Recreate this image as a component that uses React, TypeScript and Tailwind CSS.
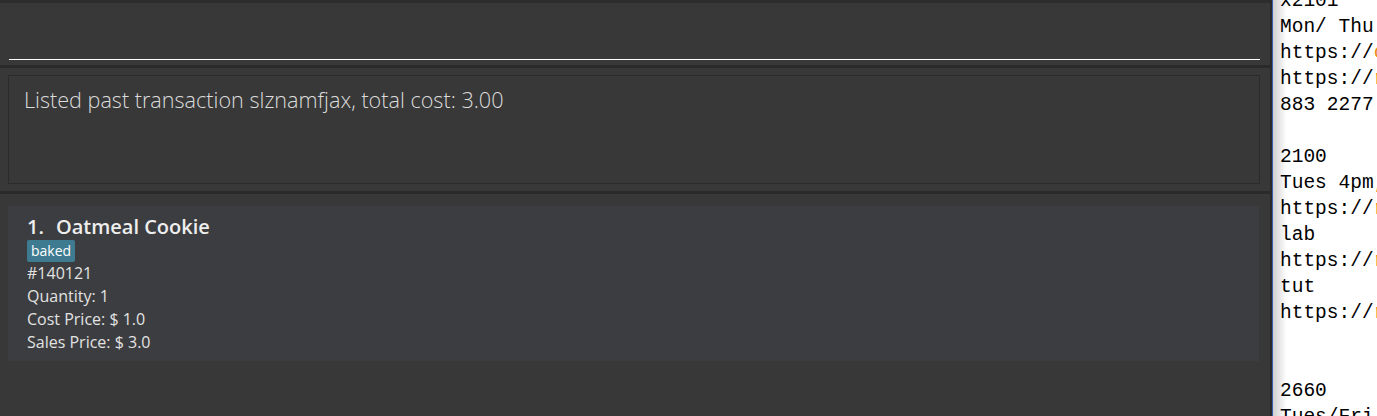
const editorLines: { text: string; link?: string }[] = [
  { text: "x2101" },
  { text: "Mon/ Thu" },
  { text: "https://", link: "c" },
  { text: "https://", link: "r" },
  { text: "883 2277" },
  { text: "" },
  { text: "2100" },
  { text: "Tues 4pm", link: "," },
  { text: "https://", link: "r" },
  { text: "lab" },
  { text: "https://", link: "r" },
  { text: "tut" },
  { text: "https://", link: "r" },
  { text: "" },
  { text: "" },
  { text: "2660" },
  { text: "Tues/Fri" },
];

const details = ["#140121", "Quantity: 1", "Cost Price: $ 1.0", "Sales Price: $ 3.0"];

export default function App() {
  return (
    <div className="flex h-[416px] w-[1377px] overflow-hidden bg-[#383838]">
      {/* main app window */}
      <div className="flex w-[1270px] shrink-0 flex-col font-['Open_Sans',sans-serif]">
        <div className="h-[3px] bg-[#2d2d2d]" />
        <div className="flex h-[62px] flex-col justify-end pb-[5px] pl-[9px] pr-[10px]">
          <div className="h-px bg-white" />
        </div>
        <div className="h-[3px] bg-[#2a2a2a]" />
        <div className="pl-[8px] pr-[10px] pt-[7px] pb-[7px]">
          <div className="h-[109px] border border-[#2b2b2b] px-[15px] pt-[8px] text-[21.6px] font-light text-[#dcdcdc]">
            Listed past transaction slznamfjax, total cost: 3.00
          </div>
        </div>
        <div className="h-[3px] bg-[#2a2a2a]" />
        <div className="pl-[8px] pr-[11px] pt-[12px]">
          <div className="bg-[#3c3d40] px-[19px] pt-[8px] pb-[7px]">
            <div className="flex text-[20px] font-semibold leading-[25px] text-[#eeeeee]">
              <span>1.</span>
              <span className="ml-[12px]">Oatmeal Cookie</span>
            </div>
            <div className="mt-[1px] flex">
              <span className="rounded-[2px] bg-[#3e7b91] px-[4px] text-[14px] leading-[22px] text-white">
                baked
              </span>
            </div>
            {details.map((d) => (
              <div key={d} className="text-[16px] leading-[23px] text-[#e2e2e2]">
                {d}
              </div>
            ))}
          </div>
        </div>
      </div>
      <div className="w-[2px] shrink-0 bg-[#2a2a2a]" />
      {/* text editor behind */}
      <div className="flex flex-1 bg-white">
        <div className="w-px bg-[#3a5db0]" />
        <div className="relative flex-1 bg-gradient-to-r from-[#cfcfcf] via-white to-white via-[12%]">
          <div className="-mt-[12px] pl-[7px] font-['Liberation_Mono',monospace] text-[19.5px] leading-[26px] text-black whitespace-pre">
            {editorLines.map((l, i) => (
              <div key={i} className="h-[26px]">
                {l.text}
                {l.link && <span className="text-[#e8891c]">{l.link}</span>}
              </div>
            ))}
          </div>
        </div>
      </div>
    </div>
  );
}
